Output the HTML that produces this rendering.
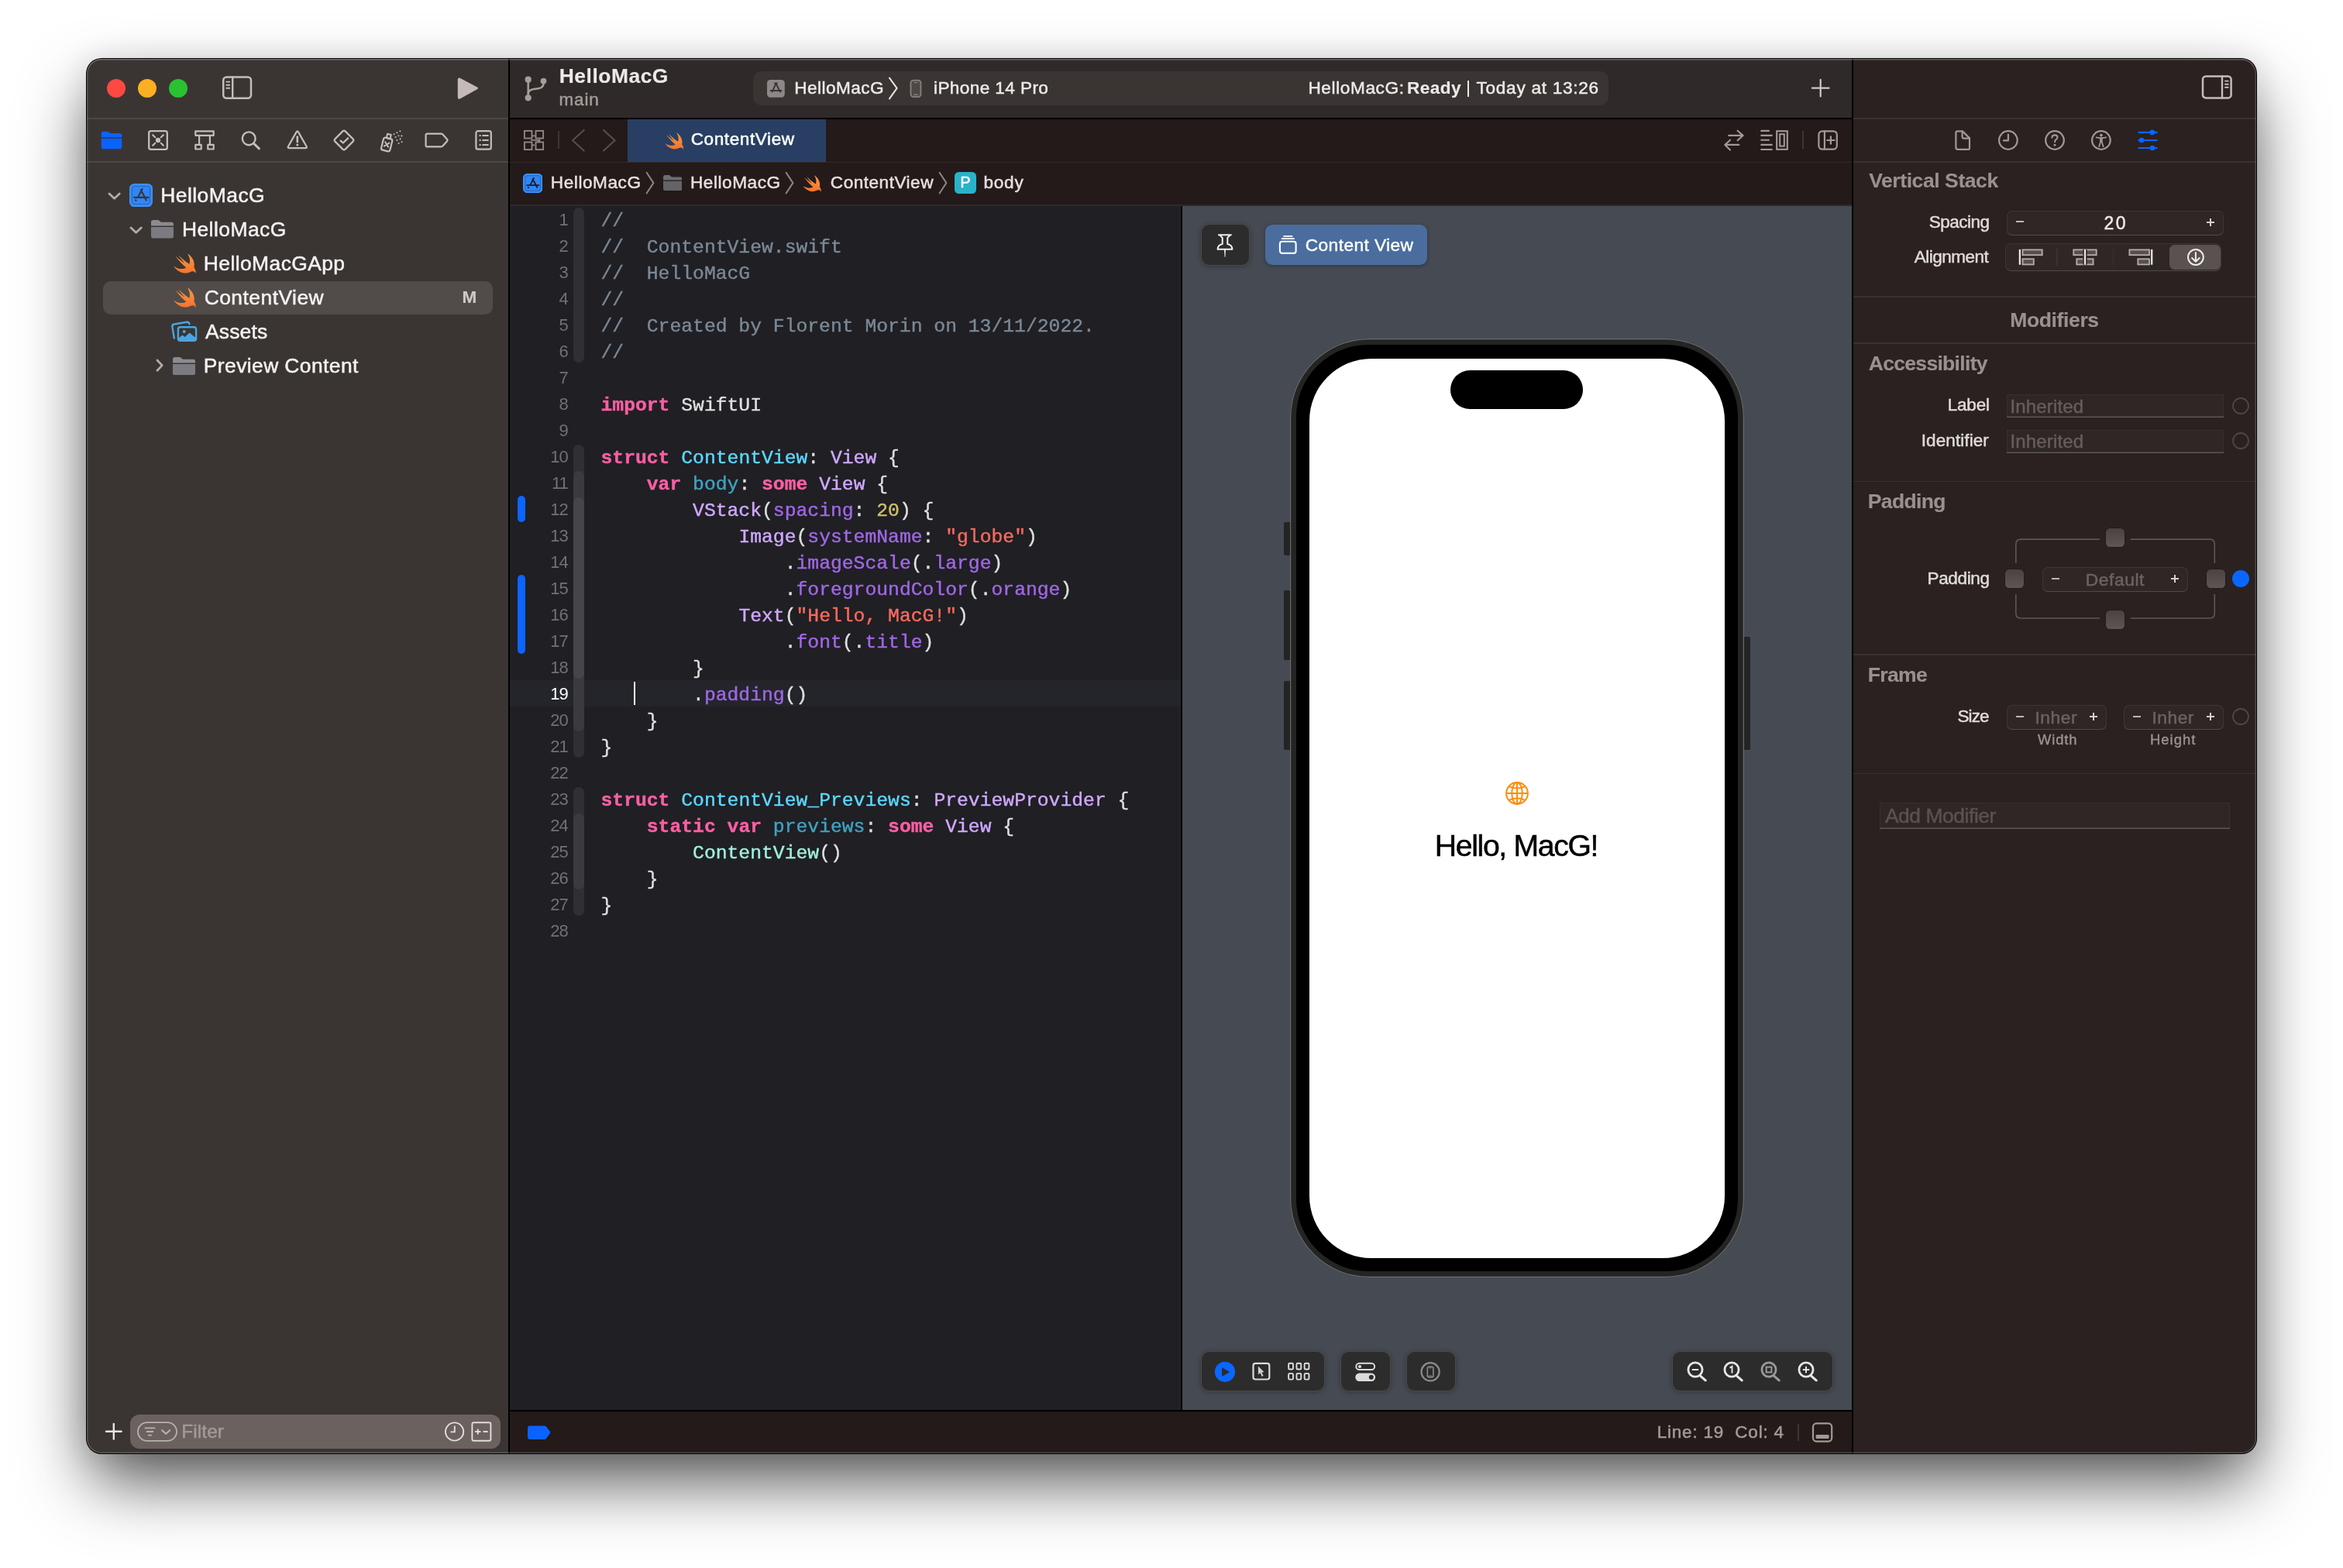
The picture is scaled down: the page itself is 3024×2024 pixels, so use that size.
<!DOCTYPE html>
<html><head><meta charset="utf-8"><title>Xcode</title>
<style>
html,body{margin:0;padding:0;}
body{width:3024px;height:2024px;background:#fff;overflow:hidden;position:relative;font-family:"Liberation Sans",sans-serif;}
#win{position:absolute;left:112px;top:76px;width:2800px;height:1800px;border-radius:19px;overflow:hidden;background:#2a2120;}
body:before{content:"";position:absolute;left:111px;top:75px;width:2802px;height:1802px;border-radius:20px;background:#000;
 box-shadow:0 40px 87px -7.3px rgba(0,0,0,.70),0 0 26px 12.3px rgba(0,0,0,.04);}
#in{position:absolute;left:-112px;top:-76px;width:3024px;height:2024px;will-change:transform;}
#rim{position:absolute;left:0;top:0;right:0;bottom:0;border-radius:19px;box-shadow:inset 0 0 0 1.5px rgba(255,255,255,.18),inset 0 1.5px 0 0 rgba(255,255,255,.14);pointer-events:none;}
.a{position:absolute;display:block;}
.t{position:absolute;white-space:pre;line-height:1;-webkit-text-stroke:0.5px;}
.code{position:absolute;left:775.5px;top:268.1px;font-family:"Liberation Mono",monospace;font-size:24.7px;line-height:34px;white-space:pre;color:#dfdfe0;letter-spacing:0.007px;-webkit-text-stroke:0.4px;}
.code b{font-weight:700;color:#fc5fa3;}
.c{color:#7b8895}.ty{color:#5dd8ff}.pt{color:#9ef1dd}.ot{color:#d0a8ff}.dc{color:#41a1c0}.fn{color:#a167e6}.st{color:#fc6a5d}.nu{color:#d0bf69}
.ln{position:absolute;left:658px;width:74.8px;text-align:right;font-size:22px;line-height:34px;color:#707076;letter-spacing:-1px;top:267.2px;white-space:pre;}
.ln i{font-style:normal;color:#fff;}

</style></head>
<body>
<div id="win">
<div id="in">
<div class="a" style="left:112px;top:76px;width:544.00px;height:1800.00px;background:#3a3533;"></div>
<div class="a" style="left:656px;top:76px;width:2.00px;height:1800.00px;background:#000;"></div>
<div class="a" style="left:658px;top:76px;width:1732.00px;height:76.00px;background:#2f2a29;"></div>
<div class="a" style="left:658px;top:152px;width:1732.00px;height:2.00px;background:#000;"></div>
<div class="a" style="left:658px;top:154px;width:1732.00px;height:110.00px;background:#231a19;"></div>
<div class="a" style="left:658px;top:208.5px;width:1732.00px;height:1.50px;background:#332b2a;"></div>
<div class="a" style="left:658px;top:264px;width:866.00px;height:1556.00px;background:#1f1f24;"></div>
<div class="a" style="left:1520.6px;top:265.6px;width:3.40px;height:1554.40px;background:#222227;"></div>
<div class="a" style="left:1524px;top:264px;width:2.00px;height:1556.00px;background:#000;"></div>
<div class="a" style="left:1526px;top:264px;width:864.00px;height:1556.00px;background:#454a53;"></div>
<div class="a" style="left:658px;top:264px;width:1732.00px;height:1.60px;background:#31282a;"></div>
<div class="a" style="left:658px;top:1820px;width:1732.00px;height:2.00px;background:#000;"></div>
<div class="a" style="left:658px;top:1822px;width:1732.00px;height:54.00px;background:#231a19;"></div>
<div class="a" style="left:2390px;top:76px;width:2.00px;height:1800.00px;background:#000;"></div>
<div class="a" style="left:2392px;top:76px;width:520.00px;height:1800.00px;background:#2a2120;"></div>
<div class="a" style="left:112px;top:152.4px;width:544.00px;height:1.80px;background:#4d4745;"></div>
<div class="a" style="left:112px;top:208.4px;width:544.00px;height:1.80px;background:#4d4745;"></div>
<div class="a" style="left:2392px;top:152.3px;width:520.00px;height:1.50px;background:#3a3231;"></div>
<div class="a" style="left:2392px;top:208.4px;width:520.00px;height:1.50px;background:#3a3231;"></div>
<div class="a" style="left:2392px;top:382px;width:520.00px;height:1.50px;background:#3a3231;"></div>
<div class="a" style="left:2392px;top:442.4px;width:520.00px;height:1.50px;background:#3a3231;"></div>
<div class="a" style="left:2392px;top:620.5px;width:520.00px;height:1.50px;background:#3a3231;"></div>
<div class="a" style="left:2392px;top:844.3px;width:520.00px;height:1.50px;background:#3a3231;"></div>
<div class="a" style="left:2392px;top:997.8px;width:520.00px;height:1.50px;background:#3a3231;"></div>
<div class="a" style="left:138px;top:102px;width:24.00px;height:24.00px;background:#fe4943;border-radius:12px;"></div>
<div class="a" style="left:178px;top:102px;width:24.00px;height:24.00px;background:#fdaf24;border-radius:12px;"></div>
<div class="a" style="left:218px;top:102px;width:24.00px;height:24.00px;background:#29c231;border-radius:12px;"></div>
<div class="a" style="left:132.5px;top:362.5px;width:503.50px;height:43.50px;background:#514b49;border-radius:10px;"></div>
<div class="t" style="left:207.23px;top:239.23px;font-size:26.4px;color:#f4f2f1;letter-spacing:0.483px;">HelloMacG</div>
<div class="t" style="left:234.93px;top:283.23px;font-size:26.4px;color:#f4f2f1;letter-spacing:0.483px;">HelloMacG</div>
<div class="t" style="left:262.83px;top:327.23px;font-size:26.4px;color:#f4f2f1;letter-spacing:0.430px;">HelloMacGApp</div>
<div class="t" style="left:263.66px;top:371.23px;font-size:26.4px;color:#f4f2f1;letter-spacing:0.486px;">ContentView</div>
<div class="t" style="left:264.95px;top:415.23px;font-size:26.4px;color:#f4f2f1;letter-spacing:0.216px;">Assets</div>
<div class="t" style="left:262.83px;top:459.23px;font-size:26.4px;color:#f4f2f1;letter-spacing:0.419px;">Preview Content</div>
<div class="t" style="left:596.49px;top:373.19px;font-size:22.5px;color:#cfc8c5;font-weight:700;-webkit-text-stroke:0.15px;">M</div>
<div class="a" style="left:168px;top:1826px;width:477.50px;height:43.50px;background:#6b6260;border-radius:12px;"></div>
<div class="t" style="left:234.29px;top:1835.68px;font-size:24.5px;color:#a39a97;letter-spacing:0.054px;">Filter</div>
<div class="t" style="left:721.73px;top:85.43px;font-size:26.4px;color:#eceae9;font-weight:700;-webkit-text-stroke:0.15px;letter-spacing:0.533px;">HelloMacG</div>
<div class="t" style="left:721.41px;top:117.59px;font-size:22.5px;color:#a59c99;letter-spacing:0.862px;">main</div>
<div class="a" style="left:972px;top:92px;width:1104.00px;height:44.00px;background:#3a3433;border-radius:11px;"></div>
<div class="t" style="left:1025.35px;top:102.54px;font-size:22.6px;color:#eceae9;letter-spacing:0.446px;">HelloMacG</div>
<div class="t" style="left:1204.99px;top:102.54px;font-size:22.6px;color:#eceae9;letter-spacing:0.393px;">iPhone 14 Pro</div>
<div class="t" style="left:1688.45px;top:102.84px;font-size:22.6px;color:#eceae9;letter-spacing:0.607px;">HelloMacG:</div>
<div class="t" style="left:1816.09px;top:102.84px;font-size:22.6px;color:#eceae9;font-weight:700;-webkit-text-stroke:0.15px;letter-spacing:0.424px;">Ready</div>
<div class="a" style="left:1894.3px;top:103.6px;width:1.90px;height:21.80px;background:#eceae9;"></div>
<div class="t" style="left:1905.49px;top:102.84px;font-size:22.6px;color:#eceae9;letter-spacing:0.725px;">Today at 13:26</div>
<div class="a" style="left:810px;top:154px;width:256.00px;height:54.50px;background:#283f63;"></div>
<div class="t" style="left:891.65px;top:169.24px;font-size:22.6px;color:#fff;letter-spacing:0.576px;">ContentView</div>
<div class="t" style="left:710.85px;top:224.64px;font-size:22.6px;color:#e4e0df;letter-spacing:0.558px;">HelloMacG</div>
<div class="t" style="left:890.95px;top:224.64px;font-size:22.6px;color:#e4e0df;letter-spacing:0.558px;">HelloMacG</div>
<div class="t" style="left:1071.85px;top:224.64px;font-size:22.6px;color:#e4e0df;letter-spacing:0.496px;">ContentView</div>
<div class="t" style="left:1269.54px;top:224.64px;font-size:22.6px;color:#e4e0df;letter-spacing:0.731px;">body</div>
<div class="a" style="left:658px;top:877.8px;width:866.00px;height:34.00px;background:#23252b;"></div>
<div class="a" style="left:668px;top:639.5px;width:10.00px;height:34.00px;background:#0b65fe;border-radius:5px;"></div>
<div class="a" style="left:668px;top:742px;width:10.00px;height:101.50px;background:#0b65fe;border-radius:5px;"></div>
<div class="a" style="left:739.9px;top:268.0px;width:14.50px;height:199.70px;background:#2f2f34;border-radius:7.25px;"></div>
<div class="a" style="left:739.9px;top:574.0px;width:14.50px;height:403.70px;background:#2f2f34;border-radius:7.25px;"></div>
<div class="a" style="left:739.9px;top:608.0px;width:14.50px;height:335.70px;background:#3a3a3f;border-radius:7.25px;"></div>
<div class="a" style="left:739.9px;top:642.0px;width:14.50px;height:233.70px;background:#45454a;border-radius:7.25px;"></div>
<div class="a" style="left:739.9px;top:1016.0px;width:14.50px;height:165.70px;background:#2f2f34;border-radius:7.25px;"></div>
<div class="a" style="left:739.9px;top:1050.0px;width:14.50px;height:97.70px;background:#3a3a3f;border-radius:7.25px;"></div>
<div class="ln">1
2
3
4
5
6
7
8
9
10
11
12
13
14
15
16
17
18
<i>19</i>
20
21
22
23
24
25
26
27
28</div>
<div class="code"><span class="c">//</span>
<span class="c">//  ContentView.swift</span>
<span class="c">//  HelloMacG</span>
<span class="c">//</span>
<span class="c">//  Created by Florent Morin on 13/11/2022.</span>
<span class="c">//</span>

<b>import</b> SwiftUI

<b>struct</b> <span class="ty">ContentView</span>: <span class="ot">View</span> {
    <b>var</b> <span class="dc">body</span>: <b>some</b> <span class="ot">View</span> {
        <span class="ot">VStack</span>(<span class="fn">spacing</span>: <span class="nu">20</span>) {
            <span class="ot">Image</span>(<span class="fn">systemName</span>: <span class="st">"globe"</span>)
                .<span class="fn">imageScale</span>(.<span class="fn">large</span>)
                .<span class="fn">foregroundColor</span>(.<span class="fn">orange</span>)
            <span class="ot">Text</span>(<span class="st">"Hello, MacG!"</span>)
                .<span class="fn">font</span>(.<span class="fn">title</span>)
        }
        .<span class="fn">padding</span>()
    }
}

<b>struct</b> <span class="ty">ContentView_Previews</span>: <span class="ot">PreviewProvider</span> {
    <b>static</b> <b>var</b> <span class="dc">previews</span>: <b>some</b> <span class="ot">View</span> {
        <span class="pt">ContentView</span>()
    }
}
</div>
<div class="a" style="left:818px;top:880.3px;width:2.30px;height:29.50px;background:#fff;"></div>
<div class="a" style="left:1551px;top:290px;width:61.00px;height:51.50px;background:#2c2c2d;border-radius:9.5px;box-shadow:0 0 0 1px rgba(78,76,68,.85),0 1px 6px 1px rgba(0,0,0,.28);"></div>
<div class="a" style="left:1633.3px;top:290px;width:208.50px;height:51.60px;background:#4a6d9e;border-radius:9.5px;box-shadow:0 1px 5px rgba(0,0,0,.3);"></div>
<div class="t" style="left:1684.74px;top:304.54px;font-size:22.8px;color:#fff;letter-spacing:0.373px;-webkit-text-stroke:0.4px #fff;">Content View</div>
<div class="a" style="left:1657px;top:673.5px;width:10.00px;height:43.50px;background:#242424;border-radius:2px;"></div>
<div class="a" style="left:1657px;top:762px;width:10.00px;height:89.50px;background:#242424;border-radius:2px;"></div>
<div class="a" style="left:1657px;top:878.5px;width:10.00px;height:89.00px;background:#242424;border-radius:2px;"></div>
<div class="a" style="left:2249px;top:822px;width:9.50px;height:145.50px;background:#242424;border-radius:2px;"></div>
<div class="a" style="left:1664.8px;top:436.7px;width:586.50px;height:1212.30px;background:#242424;border-radius:102px;box-shadow:inset 0 0 0 1.2px #6b6b6b;"></div>
<div class="a" style="left:1672.9px;top:445.2px;width:570.30px;height:1195.60px;background:#000;border-radius:93px;"></div>
<div class="a" style="left:1690px;top:462.8px;width:536.00px;height:1161.20px;background:#fff;border-radius:80px;"></div>
<div class="a" style="left:1872.3px;top:477.8px;width:170.70px;height:50.70px;background:#000;border-radius:26px;"></div>
<div class="t" style="left:1851.78px;top:1072.39px;font-size:39.2px;color:#000;letter-spacing:-1.343px;">Hello, MacG!</div>
<div class="a" style="left:1551px;top:1744.5px;width:158.00px;height:50.50px;background:#2c2c2d;border-radius:9.5px;box-shadow:0 0 0 1px rgba(78,76,68,.85),0 1px 6px 1px rgba(0,0,0,.28);"></div>
<div class="a" style="left:1730.5px;top:1744.5px;width:63.50px;height:50.50px;background:#2c2c2d;border-radius:9.5px;box-shadow:0 0 0 1px rgba(78,76,68,.85),0 1px 6px 1px rgba(0,0,0,.28);"></div>
<div class="a" style="left:1816px;top:1744.5px;width:62.00px;height:50.50px;background:#2c2c2d;border-radius:9.5px;box-shadow:0 0 0 1px rgba(78,76,68,.85),0 1px 6px 1px rgba(0,0,0,.28);"></div>
<div class="a" style="left:2158.5px;top:1744.5px;width:206.50px;height:50.50px;background:#2c2c2d;border-radius:9.5px;box-shadow:0 0 0 1px rgba(78,76,68,.85),0 1px 6px 1px rgba(0,0,0,.28);"></div>
<div class="t" style="left:2138.65px;top:1837.69px;font-size:22.5px;color:#a29b98;letter-spacing:0.810px;-webkit-text-stroke:0.5px #a29b98;">Line: 19  Col: 4</div>
<div class="t" style="left:2412.22px;top:219.68px;font-size:26.5px;color:#9a918e;font-weight:700;-webkit-text-stroke:0.15px;letter-spacing:-0.417px;">Vertical Stack</div>
<div class="t" style="left:2594.23px;top:400.48px;font-size:26.5px;color:#9a918e;font-weight:700;-webkit-text-stroke:0.15px;letter-spacing:-0.366px;">Modifiers</div>
<div class="t" style="left:2411.74px;top:456.28px;font-size:26.5px;color:#9a918e;font-weight:700;-webkit-text-stroke:0.15px;letter-spacing:-0.686px;">Accessibility</div>
<div class="t" style="left:2410.83px;top:634.28px;font-size:26.5px;color:#9a918e;font-weight:700;-webkit-text-stroke:0.15px;letter-spacing:-0.664px;">Padding</div>
<div class="t" style="left:2410.83px;top:858.48px;font-size:26.5px;color:#9a918e;font-weight:700;-webkit-text-stroke:0.15px;letter-spacing:-0.665px;">Frame</div>
<div class="t" style="left:2489.68px;top:276.19px;font-size:22.5px;color:#dfdbd9;letter-spacing:-0.507px;">Spacing</div>
<div class="t" style="left:2470.76px;top:320.69px;font-size:22.5px;color:#dfdbd9;letter-spacing:-0.518px;">Alignment</div>
<div class="t" style="left:2513.65px;top:512.19px;font-size:22.5px;color:#dfdbd9;letter-spacing:-0.176px;">Label</div>
<div class="t" style="left:2479.72px;top:558.19px;font-size:22.5px;color:#dfdbd9;letter-spacing:0.094px;">Identifier</div>
<div class="t" style="left:2487.55px;top:735.69px;font-size:22.5px;color:#dfdbd9;letter-spacing:-0.363px;">Padding</div>
<div class="t" style="left:2526.48px;top:913.69px;font-size:22.5px;color:#dfdbd9;letter-spacing:-0.917px;">Size</div>
<svg class="a" style="left:285px;top:96px;" width="42" height="34" viewBox="0 0 42 34"><rect x="3.2" y="3.4" width="35.8" height="27.4" rx="4.2" fill="none" stroke="#c6bdba" stroke-width="2.5" stroke-linecap="round" stroke-linejoin="round" /><path d="M15.2 3.4V30.8" fill="none" stroke="#c6bdba" stroke-width="2.4" stroke-linecap="round" stroke-linejoin="round" /><path d="M7.3 9.6h4M7.3 13.7h4M7.3 17.8h4" fill="none" stroke="#c6bdba" stroke-width="1.9" stroke-linecap="round" stroke-linejoin="round" /></svg>
<svg class="a" style="left:588px;top:97px;" width="34" height="34" viewBox="0 0 34 34"><path d="M6.2 4 L27.4 15.2 Q30.6 16.9 27.4 18.6 L6.2 30.2 Q2.8 32 2.8 28.4 V5.8 Q2.8 2.2 6.2 4Z" fill="#c4bbb8"/></svg>
<svg class="a" style="left:130px;top:168px;" width="30" height="26" viewBox="0 0 30 26"><path d="M0.8 9.2V4.6Q0.8 1.8 3.6 1.8H8.4Q9.8 1.8 10.8 2.7L11.6 3.4Q12.4 4 13.6 4H24.4Q27.2 4 27.2 6.8V9.2Z" fill="#0b63ff"/><path d="M0.8 10.7H27.2V21.4Q27.2 24.2 24.4 24.2H3.6Q0.8 24.2 0.8 21.4Z" fill="#0b63ff"/></svg>
<svg class="a" style="left:189px;top:166px;" width="30" height="30" viewBox="0 0 30 30"><rect x="3.2" y="3.2" width="23.6" height="23.6" rx="2.6" fill="none" stroke="#c6bdba" stroke-width="2.3" stroke-linecap="round" stroke-linejoin="round" /><circle cx="15" cy="15" r="3.2" fill="#c6bdba"/><path d="M8.2 8.2l3 3M21.8 8.2l-3 3M8.2 21.8l3-3M21.8 21.8l-3-3" fill="none" stroke="#c6bdba" stroke-width="2.1" stroke-linecap="round" stroke-linejoin="round" /></svg>
<svg class="a" style="left:249px;top:166px;" width="30" height="30" viewBox="0 0 30 30"><rect x="3.3" y="3.4" width="23.4" height="5.4" fill="none" stroke="#c6bdba" stroke-width="2.2" stroke-linecap="round" stroke-linejoin="round"  stroke-linejoin="miter"/><path d="M8.1 8.8V20.9M21.9 8.8V20.9" fill="none" stroke="#c6bdba" stroke-width="2.2" stroke-linecap="round" stroke-linejoin="round" /><rect x="3.3" y="20.9" width="7.4" height="5.6" fill="none" stroke="#c6bdba" stroke-width="2.2" stroke-linecap="round" stroke-linejoin="round"  stroke-linejoin="miter"/><rect x="19.3" y="20.9" width="7.4" height="5.6" fill="none" stroke="#c6bdba" stroke-width="2.2" stroke-linecap="round" stroke-linejoin="round"  stroke-linejoin="miter"/></svg>
<svg class="a" style="left:309px;top:166px;" width="30" height="30" viewBox="0 0 30 30"><circle cx="12.2" cy="12.8" r="8.4" fill="none" stroke="#c6bdba" stroke-width="2.4" stroke-linecap="round" stroke-linejoin="round" /><path d="M18.4 19.2L25.4 25.8" fill="none" stroke="#c6bdba" stroke-width="3" stroke-linecap="round" stroke-linejoin="round" /></svg>
<svg class="a" style="left:369px;top:166px;" width="30" height="30" viewBox="0 0 30 30"><path d="M13.6 4.4Q14.8 2.4 16 4.4L26.6 23Q27.6 25.2 25.4 25.2H4.2Q2 25.2 3 23Z" fill="none" stroke="#c6bdba" stroke-width="2.2" stroke-linecap="round" stroke-linejoin="round" /><path d="M14.8 10.6V17.2" fill="none" stroke="#c6bdba" stroke-width="2.6" stroke-linecap="round" stroke-linejoin="round" /><circle cx="14.8" cy="21.1" r="1.5" fill="#c6bdba"/></svg>
<svg class="a" style="left:429px;top:166px;" width="30" height="30" viewBox="0 0 30 30"><path d="M13.4 3.4Q15 1.9 16.6 3.4L26.6 13.4Q28.1 15 26.6 16.6L16.6 26.6Q15 28.1 13.4 26.6L3.4 16.6Q1.9 15 3.4 13.4Z" fill="none" stroke="#c6bdba" stroke-width="2.2" stroke-linecap="round" stroke-linejoin="round" /><path d="M10.6 15.6L13.8 18.5L20.2 12.4" fill="none" stroke="#c6bdba" stroke-width="2.3" stroke-linecap="round" stroke-linejoin="round" /></svg>
<svg class="a" style="left:487px;top:164px;" width="36" height="34" viewBox="0 0 36 34"><g transform="translate(-1.6 0.4) rotate(14 14 22)"><rect x="8" y="14" width="11.6" height="16.4" rx="2.4" fill="none" stroke="#c6bdba" stroke-width="2.2" stroke-linecap="round" stroke-linejoin="round" /><rect x="11.4" y="8.6" width="4.8" height="5.4" fill="none" stroke="#c6bdba" stroke-width="2" stroke-linecap="round" stroke-linejoin="round" /><path d="M11.2 19.6l5.2 5.2M16.4 19.6l-5.2 5.2" fill="none" stroke="#c6bdba" stroke-width="2" stroke-linecap="round" stroke-linejoin="round" /></g><g fill="#c6bdba"><circle cx="21.6" cy="9.2" r="1.05"/><circle cx="25.4" cy="7.2" r="1.05"/><circle cx="29.4" cy="5.2" r="1.05"/><circle cx="23.6" cy="13" r="1.05"/><circle cx="27.4" cy="11.2" r="1.05"/><circle cx="31.4" cy="11.4" r="1.05"/><circle cx="25.4" cy="17" r="1.05"/><circle cx="29.6" cy="15.4" r="1.05"/><circle cx="27.6" cy="21" r="1.05"/><circle cx="31.6" cy="19.2" r="1.05"/></g></svg>
<svg class="a" style="left:547px;top:168px;" width="34" height="26" viewBox="0 0 34 26"><path d="M4.6 4.6H22.2Q23.6 4.6 24.4 5.6L30.2 12Q30.9 13 30.2 14L24.4 20.4Q23.6 21.4 22.2 21.4H4.6Q2.6 21.4 2.6 19.4V6.6Q2.6 4.6 4.6 4.6Z" fill="none" stroke="#c6bdba" stroke-width="2.2" stroke-linecap="round" stroke-linejoin="round" /></svg>
<svg class="a" style="left:609px;top:166px;" width="30" height="30" viewBox="0 0 30 30"><rect x="5.4" y="3.2" width="19.4" height="23.4" rx="2.4" fill="none" stroke="#c6bdba" stroke-width="2.2" stroke-linecap="round" stroke-linejoin="round" /><path d="M14.2 9h6.6M14.2 15h6.6M14.2 21h6.6" fill="none" stroke="#c6bdba" stroke-width="2.2" stroke-linecap="round" stroke-linejoin="round" /><path d="M10.4 9h.5M10.4 15h.5M10.4 21h.5" fill="none" stroke="#c6bdba" stroke-width="2.2" stroke-linecap="round" stroke-linejoin="round" /></svg>
<svg width="0" height="0" style="position:absolute"><defs><linearGradient id="sw" x1="0" y1="0" x2="0" y2="1"><stop offset="0" stop-color="#fd9742"/><stop offset="1" stop-color="#f4742c"/></linearGradient></defs></svg>
<svg class="a" style="left:223.9px;top:327px;" width="29.7" height="27.09" viewBox="0 0 29.7 27.09"><path transform="scale(1.5848) translate(-2.42 -3.41)" d="M13.543 3.41c4.114 2.47 6.545 7.162 5.549 11.131-.024.093-.05.181-.076.272l.002.001c2.062 2.538 1.5 5.258 1.236 4.745-1.072-2.086-3.066-1.568-4.088-1.043a6.803 6.803 0 0 1-.281.158l-.02.012-.002.002c-2.115 1.123-4.957 1.205-7.812-.022a12.568 12.568 0 0 1-5.64-4.838c.649.48 1.35.902 2.097 1.252 3.019 1.414 6.051 1.311 8.197-.002C9.651 12.73 7.101 9.67 5.146 7.191a10.628 10.628 0 0 1-1.005-1.384c2.34 2.142 6.038 4.83 7.365 5.576C8.69 8.408 6.208 4.743 6.324 4.86c4.436 4.47 8.528 6.996 8.528 6.996.154.085.27.154.36.213.085-.215.16-.437.224-.668.708-2.588-.09-5.548-1.893-7.992z" fill="url(#sw)"/></svg>
<svg class="a" style="left:223.9px;top:370.6px;" width="29.7" height="27.09" viewBox="0 0 29.7 27.09"><path transform="scale(1.5848) translate(-2.42 -3.41)" d="M13.543 3.41c4.114 2.47 6.545 7.162 5.549 11.131-.024.093-.05.181-.076.272l.002.001c2.062 2.538 1.5 5.258 1.236 4.745-1.072-2.086-3.066-1.568-4.088-1.043a6.803 6.803 0 0 1-.281.158l-.02.012-.002.002c-2.115 1.123-4.957 1.205-7.812-.022a12.568 12.568 0 0 1-5.64-4.838c.649.48 1.35.902 2.097 1.252 3.019 1.414 6.051 1.311 8.197-.002C9.651 12.73 7.101 9.67 5.146 7.191a10.628 10.628 0 0 1-1.005-1.384c2.34 2.142 6.038 4.83 7.365 5.576C8.69 8.408 6.208 4.743 6.324 4.86c4.436 4.47 8.528 6.996 8.528 6.996.154.085.27.154.36.213.085-.215.16-.437.224-.668.708-2.588-.09-5.548-1.893-7.992z" fill="url(#sw)"/></svg>
<svg class="a" style="left:857.7px;top:170.7px;" width="25.1" height="22.9" viewBox="0 0 25.1 22.9"><path transform="scale(1.3308) translate(-2.42 -3.41)" d="M13.543 3.41c4.114 2.47 6.545 7.162 5.549 11.131-.024.093-.05.181-.076.272l.002.001c2.062 2.538 1.5 5.258 1.236 4.745-1.072-2.086-3.066-1.568-4.088-1.043a6.803 6.803 0 0 1-.281.158l-.02.012-.002.002c-2.115 1.123-4.957 1.205-7.812-.022a12.568 12.568 0 0 1-5.64-4.838c.649.48 1.35.902 2.097 1.252 3.019 1.414 6.051 1.311 8.197-.002C9.651 12.73 7.101 9.67 5.146 7.191a10.628 10.628 0 0 1-1.005-1.384c2.34 2.142 6.038 4.83 7.365 5.576C8.69 8.408 6.208 4.743 6.324 4.86c4.436 4.47 8.528 6.996 8.528 6.996.154.085.27.154.36.213.085-.215.16-.437.224-.668.708-2.588-.09-5.548-1.893-7.992z" fill="url(#sw)"/></svg>
<svg class="a" style="left:1036px;top:226.2px;" width="24.8" height="22.63" viewBox="0 0 24.8 22.63"><path transform="scale(1.3142) translate(-2.42 -3.41)" d="M13.543 3.41c4.114 2.47 6.545 7.162 5.549 11.131-.024.093-.05.181-.076.272l.002.001c2.062 2.538 1.5 5.258 1.236 4.745-1.072-2.086-3.066-1.568-4.088-1.043a6.803 6.803 0 0 1-.281.158l-.02.012-.002.002c-2.115 1.123-4.957 1.205-7.812-.022a12.568 12.568 0 0 1-5.64-4.838c.649.48 1.35.902 2.097 1.252 3.019 1.414 6.051 1.311 8.197-.002C9.651 12.73 7.101 9.67 5.146 7.191a10.628 10.628 0 0 1-1.005-1.384c2.34 2.142 6.038 4.83 7.365 5.576C8.69 8.408 6.208 4.743 6.324 4.86c4.436 4.47 8.528 6.996 8.528 6.996.154.085.27.154.36.213.085-.215.16-.437.224-.668.708-2.588-.09-5.548-1.893-7.992z" fill="url(#sw)"/></svg>
<svg class="a" style="left:139.4px;top:247.9px;" width="17.2" height="10.2" viewBox="0 0 17.2 10.2"><path d="M2 2L8.6 8.2L15.2 2" fill="none" stroke="#b4aba8" stroke-width="2.8" stroke-linecap="round" stroke-linejoin="round"/></svg>
<svg class="a" style="left:167.4px;top:292.0px;" width="17.2" height="10.2" viewBox="0 0 17.2 10.2"><path d="M2 2L8.6 8.2L15.2 2" fill="none" stroke="#b4aba8" stroke-width="2.8" stroke-linecap="round" stroke-linejoin="round"/></svg>
<svg class="a" style="left:201.1px;top:463.2px;" width="10.2" height="17.2" viewBox="0 0 10.2 17.2"><path d="M2 2L8.2 8.6L2 15.2" fill="none" stroke="#b4aba8" stroke-width="2.8" stroke-linecap="round" stroke-linejoin="round"/></svg>
<svg class="a" style="left:166.7px;top:237px;" width="30" height="30" viewBox="0 0 30 30"><g transform="scale(1.0000)"><rect x="0" y="0" width="30" height="30" rx="6.4" fill="#3a90ff"/><rect x="2.7" y="2.7" width="24.6" height="24.6" rx="4.2" fill="#2c5fa8"/><rect x="3.8" y="3.8" width="22.4" height="22.4" rx="3.3" fill="#2e86fb"/><path d="M16.6 7L11 18M14.9 8.3L21.8 21.4M6.2 17.9H24.4M8 21.2L8.6 21.8" fill="none" stroke="#3a3533" stroke-width="2.1" stroke-linecap="round"/></g></svg>
<svg class="a" style="left:675px;top:224px;" width="25.2" height="25.2" viewBox="0 0 25.2 25.2"><g transform="scale(0.8400)"><rect x="0" y="0" width="30" height="30" rx="6.4" fill="#3a90ff"/><rect x="2.7" y="2.7" width="24.6" height="24.6" rx="4.2" fill="#2c5fa8"/><rect x="3.8" y="3.8" width="22.4" height="22.4" rx="3.3" fill="#2e86fb"/><path d="M16.6 7L11 18M14.9 8.3L21.8 21.4M6.2 17.9H24.4M8 21.2L8.6 21.8" fill="none" stroke="#231a19" stroke-width="2.1" stroke-linecap="round"/></g></svg>
<svg class="a" style="left:195px;top:284.3px;" width="29" height="23.6" viewBox="0 0 29 23.6"><g transform="scale(1.0000 1.0000)"><path d="M0 7.6V2.8Q0 0 2.8 0H8.4Q9.8 0 10.8 1L11.8 2Q12.6 2.8 14 2.8H26.2Q29 2.8 29 5.6V7.6Z" fill="#8c8b90"/><path d="M0 9H29V20.8Q29 23.6 26.2 23.6H2.8Q0 23.6 0 20.8Z" fill="#7c7b81"/></g></svg>
<svg class="a" style="left:223px;top:460.8px;" width="29" height="23.6" viewBox="0 0 29 23.6"><g transform="scale(1.0000 1.0000)"><path d="M0 7.6V2.8Q0 0 2.8 0H8.4Q9.8 0 10.8 1L11.8 2Q12.6 2.8 14 2.8H26.2Q29 2.8 29 5.6V7.6Z" fill="#8c8b90"/><path d="M0 9H29V20.8Q29 23.6 26.2 23.6H2.8Q0 23.6 0 20.8Z" fill="#7c7b81"/></g></svg>
<svg class="a" style="left:855.6px;top:225.6px;" width="24.4" height="20" viewBox="0 0 24.4 20"><g transform="scale(0.8414 0.8475)"><path d="M0 7.6V2.8Q0 0 2.8 0H8.4Q9.8 0 10.8 1L11.8 2Q12.6 2.8 14 2.8H26.2Q29 2.8 29 5.6V7.6Z" fill="#6d6c71"/><path d="M0 9H29V20.8Q29 23.6 26.2 23.6H2.8Q0 23.6 0 20.8Z" fill="#646368"/></g></svg>
<svg class="a" style="left:219px;top:411px;" width="38" height="33" viewBox="0 0 38 33"><g transform="rotate(-9.5 14 15)"><path d="M4.2 24V9.2Q4.2 6.2 7.2 6.2H23.6Q26.6 6.2 26.6 9.2" fill="none" stroke="#4aa5e0" stroke-width="2.4" stroke-linecap="round"/></g><rect x="10.9" y="11.2" width="23.2" height="17.6" rx="2.8" fill="#3a3533" stroke="#4aa5e0" stroke-width="2.4"/><circle cx="18.7" cy="16.9" r="2" fill="#4aa5e0"/><path d="M10.9 26L16.4 21.4L19.6 24L25.6 18.6L34.1 25.6V27Q34.1 28.8 32.3 28.8H12.7Q10.9 28.8 10.9 27Z" fill="#4aa5e0"/></svg>
<svg class="a" style="left:672px;top:94px;" width="40" height="42" viewBox="0 0 40 42"><path d="M9.7 8.7V32.3" fill="none" stroke="#a69d9a" stroke-width="2.5"/><path d="M29.5 10.6V13.4Q29.5 19.2 22.6 20.2L15.6 21.2Q9.7 22.2 9.7 27.6" fill="none" stroke="#a69d9a" stroke-width="2.5"/><circle cx="9.7" cy="8.7" r="4.1" fill="#a69d9a"/><circle cx="29.5" cy="10.6" r="3.9" fill="#a69d9a"/><circle cx="9.7" cy="32.3" r="4.1" fill="#a69d9a"/></svg>
<svg class="a" style="left:990px;top:103px;" width="23" height="23" viewBox="0 0 23 23"><rect x="0" y="0" width="22.8" height="22.8" rx="4.2" fill="#8d8887"/><path d="M11.6 4.6L6.6 15.4M10 4.5H12.8M11.9 5.6L17 15.6M4.6 14H18.6" fill="none" stroke="#3a3433" stroke-width="1.9" stroke-linecap="round"/></svg>
<svg class="a" style="left:1145px;top:98px;" width="16" height="32" viewBox="0 0 16 32"><path d="M3 2.6L12.6 15.9L3 29.4" fill="none" stroke="#e4e0de" stroke-width="2.1" stroke-linecap="round" stroke-linejoin="round"/></svg>
<svg class="a" style="left:1173px;top:101px;" width="18" height="27" viewBox="0 0 18 27"><rect x="2.5" y="2.8" width="12.9" height="21.2" rx="3.2" fill="#4d4746" stroke="#837c7a" stroke-width="2"/><path d="M7 5.6h3.9M6.6 21.3h4.7" stroke="#837c7a" stroke-width="1.4" stroke-linecap="round"/></svg>
<svg class="a" style="left:2336px;top:100px;" width="28" height="28" viewBox="0 0 28 28"><path d="M13.7 2.9V24.5M2.9 13.7H24.5" stroke="#cfc8c5" stroke-width="2.2" stroke-linecap="round"/></svg>
<svg class="a" style="left:2839px;top:95px;" width="46" height="36" viewBox="0 0 46 36"><rect x="4" y="3.4" width="36.6" height="28" rx="4" fill="none" stroke="#c6bdba" stroke-width="2.5" stroke-linecap="round" stroke-linejoin="round" /><path d="M29 3.4V31.4" fill="none" stroke="#c6bdba" stroke-width="2.4" stroke-linecap="round" stroke-linejoin="round" /><path d="M33 9.6h3.8M33 13.7h3.8M33 17.8h3.8" fill="none" stroke="#c6bdba" stroke-width="1.9" stroke-linecap="round" stroke-linejoin="round" /></svg>
<svg class="a" style="left:674px;top:166px;" width="30" height="30" viewBox="0 0 30 30"><g fill="none" stroke="#8f8784" stroke-width="1.9"><rect x="2.9" y="2.9" width="9.6" height="9.6"/><rect x="17.5" y="2.9" width="9.6" height="9.6"/><rect x="2.9" y="17.5" width="9.6" height="9.6"/><rect x="17.5" y="17.5" width="9.6" height="9.6"/><path d="M12.5 9.4H17.5M12.5 21.4H16M22.3 12.5V17.5M20.5 14.6V17.5M11 14.9H20.5"/></g></svg>
<div class="a" style="left:720.2px;top:169px;width:1.80px;height:23.00px;background:#3d3533;"></div>
<svg class="a" style="left:736.5px;top:165.75px;" width="18.6" height="30.5" viewBox="0 0 18.6 30.5"><path d="M16.6 2L2 15.25L16.6 28.5" fill="none" stroke="#574e4c" stroke-width="2.2" stroke-linecap="round" stroke-linejoin="round"/></svg>
<svg class="a" style="left:776.5px;top:165.75px;" width="18.6" height="30.5" viewBox="0 0 18.6 30.5"><path d="M2 2L16.6 15.25L2 28.5" fill="none" stroke="#574e4c" stroke-width="2.2" stroke-linecap="round" stroke-linejoin="round"/></svg>
<svg class="a" style="left:2222px;top:164px;" width="34" height="34" viewBox="0 0 34 34"><path d="M9.2 10.9H27.3M20.6 4.7L27.6 10.9L20.6 17.2" fill="none" stroke="#a39a97" stroke-width="2.1" stroke-linecap="round" stroke-linejoin="round" /><path d="M22.4 22.9H4.6M11 16.7L4.3 22.9L11 29.5" fill="none" stroke="#a39a97" stroke-width="2.1" stroke-linecap="round" stroke-linejoin="round" /></svg>
<svg class="a" style="left:2270px;top:164px;" width="42" height="34" viewBox="0 0 42 34"><path d="M2.4 4.9H13.8M2.4 10.9H17.6M2.4 16.7H13.8M2.4 22.9H17.6M2.4 29H17.6" stroke="#a39a97" stroke-width="2.1" fill="none"/><rect x="23.2" y="5.2" width="13.6" height="23.6" fill="none" stroke="#a39a97" stroke-width="2.1"/><rect x="27.2" y="9.2" width="5.6" height="15.4" fill="none" stroke="#a39a97" stroke-width="2"/></svg>
<div class="a" style="left:2326px;top:169px;width:1.80px;height:23.00px;background:#3d3533;"></div>
<svg class="a" style="left:2343px;top:164px;" width="34" height="34" viewBox="0 0 34 34"><rect x="4.4" y="5.3" width="23.4" height="23.4" rx="4.6" fill="none" stroke="#a39a97" stroke-width="2.2" stroke-linecap="round" stroke-linejoin="round" /><path d="M11.9 5.3V28.7" fill="none" stroke="#a39a97" stroke-width="2.2" stroke-linecap="round" stroke-linejoin="round" /><path d="M19.9 12.3V21.7M15.2 17H24.6" fill="none" stroke="#a39a97" stroke-width="2.2" stroke-linecap="round" stroke-linejoin="round" /></svg>
<svg class="a" style="left:2519px;top:164px;" width="30" height="34" viewBox="0 0 30 34"><path d="M7.6 5.4H14L23 14.4V27.2Q23 28.8 21.4 28.8H7.6Q5.4 28.8 5.4 26.6V7.6Q5.4 5.4 7.6 5.4Z" fill="none" stroke="#a29996" stroke-width="2.2" stroke-linecap="round" stroke-linejoin="round" /><path d="M13.6 5.6V12.6Q13.6 14.6 15.6 14.6H22.8" fill="none" stroke="#a29996" stroke-width="2.2" stroke-linecap="round" stroke-linejoin="round" /></svg>
<svg class="a" style="left:2577px;top:166px;" width="30" height="30" viewBox="0 0 30 30"><circle cx="14.9" cy="15" r="11.8" fill="none" stroke="#a29996" stroke-width="2.2" stroke-linecap="round" stroke-linejoin="round" /><path d="M14.9 7.6V15.4H9" fill="none" stroke="#a29996" stroke-width="2.2" stroke-linecap="round" stroke-linejoin="round"  stroke-linejoin="miter" stroke-linecap="butt"/></svg>
<svg class="a" style="left:2637px;top:166px;" width="30" height="30" viewBox="0 0 30 30"><circle cx="15" cy="15" r="11.8" fill="none" stroke="#a29996" stroke-width="2.2" stroke-linecap="round" stroke-linejoin="round" /><path d="M11.4 11.6Q11.6 8.4 15 8.4Q18.5 8.4 18.5 11.3Q18.5 13 16.6 14.2Q15 15.2 15 17.2" fill="none" stroke="#a29996" stroke-width="2.1" stroke-linecap="round" stroke-linejoin="round" /><circle cx="15" cy="21.2" r="1.45" fill="#a29996"/></svg>
<svg class="a" style="left:2697px;top:166px;" width="30" height="30" viewBox="0 0 30 30"><circle cx="14.9" cy="15" r="11.8" fill="none" stroke="#a29996" stroke-width="2.2" stroke-linecap="round" stroke-linejoin="round" /><circle cx="14.9" cy="8.6" r="1.9" fill="#a29996"/><path d="M8.6 11.4Q14.9 13 21.2 11.4" fill="none" stroke="#a29996" stroke-width="1.9" stroke-linecap="round" stroke-linejoin="round" /><path d="M14.9 12.4V16.4M14 12.6V17.2L12.2 23.2M15.8 12.6V17.2L17.6 23.2" fill="none" stroke="#a29996" stroke-width="1.8" stroke-linecap="round" stroke-linejoin="round" /></svg>
<svg class="a" style="left:2756px;top:164px;" width="34" height="34" viewBox="0 0 34 34"><path d="M4.4 6.9H27.8M4.4 17H27.8M4.4 27H27.8" stroke="#0a66ff" stroke-width="2.2" stroke-linecap="round"/><circle cx="21.8" cy="6.9" r="3.3" fill="#0a66ff"/><circle cx="8" cy="17" r="3.3" fill="#0a66ff"/><circle cx="22" cy="27" r="3.3" fill="#0a66ff"/></svg>
<svg class="a" style="left:831px;top:220px;" width="16" height="32" viewBox="0 0 16 32"><path d="M3.6 2.8L12.4 16.1L3.6 29.5" fill="none" stroke="#8d8582" stroke-width="2" stroke-linecap="round" stroke-linejoin="round"/></svg>
<svg class="a" style="left:1010.9px;top:220px;" width="16" height="32" viewBox="0 0 16 32"><path d="M3.6 2.8L12.4 16.1L3.6 29.5" fill="none" stroke="#8d8582" stroke-width="2" stroke-linecap="round" stroke-linejoin="round"/></svg>
<svg class="a" style="left:1208.8px;top:220px;" width="16" height="32" viewBox="0 0 16 32"><path d="M3.6 2.8L12.4 16.1L3.6 29.5" fill="none" stroke="#8d8582" stroke-width="2" stroke-linecap="round" stroke-linejoin="round"/></svg>
<div class="a" style="left:1232.2px;top:222.3px;width:27.60px;height:27.60px;background:#29b3c9;border-radius:5.5px;"></div>
<div class="t" style="left:1239.41px;top:226.30px;font-size:19.5px;color:#fff;-webkit-text-stroke:0.6px #fff;">P</div>
<svg class="a" style="left:1566px;top:298px;" width="30" height="38" viewBox="0 0 30 38"><path d="M6.9 5.2H22.9M8.4 5.5L11.7 8.9V17.1C8 17.7 5.8 20.4 5.6 23.8H24.4C24.2 20.4 22 17.7 18.3 17.1V8.9L21.6 5.5" fill="none" stroke="#f0f0f0" stroke-width="2" stroke-linejoin="round" stroke-linecap="round"/><path d="M14 23.8H16L15.4 33.4Q15 34.2 14.6 33.4Z" fill="#f0f0f0"/></svg>
<svg class="a" style="left:1648px;top:301px;" width="30" height="30" viewBox="0 0 30 30"><rect x="3.9" y="10.7" width="20.7" height="15.2" rx="3" fill="none" stroke="#fff" stroke-width="2.1"/><path d="M6.6 7H21.9" stroke="#fff" stroke-width="1.9" stroke-linecap="round"/><path d="M9 3.9H19.6" stroke="#fff" stroke-width="1.7" stroke-linecap="round"/></svg>
<svg class="a" style="left:1566px;top:1756px;" width="30" height="30" viewBox="0 0 30 30"><circle cx="15" cy="14.8" r="13.1" fill="#0a66ff"/><path d="M11 9.9V20.1Q11 20.9 11.8 20.5L20.4 15.5Q21.2 15 20.4 14.5L11.8 9.5Q11 9.1 11 9.9Z" fill="#2c2c2d"/></svg>
<svg class="a" style="left:1614px;top:1756px;" width="30" height="30" viewBox="0 0 30 30"><rect x="3.5" y="3.9" width="20.8" height="20.6" rx="2.8" fill="none" stroke="#dcdcdc" stroke-width="2.2"/><path d="M9.9 7.6L17.6 15.2H14.4L16.6 19.9L14.6 20.8L12.5 16.1L9.9 18.4Z" fill="#d2d2d2"/></svg>
<svg class="a" style="left:1660px;top:1756px;" width="34" height="30" viewBox="0 0 34 30"><g fill="none" stroke="#dedede" stroke-width="1.9"><rect x="3.15" y="3.75" width="5.8" height="7.8" rx="1.4"/><rect x="3.15" y="16.85" width="5.8" height="7.8" rx="1.4"/><rect x="13.45" y="3.75" width="5.8" height="7.8" rx="1.4"/><rect x="13.45" y="16.85" width="5.8" height="7.8" rx="1.4"/><rect x="23.65" y="3.75" width="5.8" height="7.8" rx="1.4"/><rect x="23.65" y="16.85" width="5.8" height="7.8" rx="1.4"/></g></svg>
<svg class="a" style="left:1746px;top:1756px;" width="34" height="30" viewBox="0 0 34 30"><rect x="4.3" y="3.8" width="23.8" height="8.3" rx="4.15" fill="none" stroke="#dcdcdc" stroke-width="2"/><circle cx="9" cy="8" r="2.1" fill="#dcdcdc"/><rect x="3.3" y="16.6" width="25.8" height="10.3" rx="5.15" fill="#dcdcdc"/><circle cx="23.8" cy="21.7" r="3" fill="#2c2c2d"/></svg>
<svg class="a" style="left:1831px;top:1756px;" width="30" height="30" viewBox="0 0 30 30"><circle cx="15.1" cy="14.8" r="11.6" fill="none" stroke="#8c8c8c" stroke-width="2.2"/><rect x="11.3" y="8.2" width="7.6" height="13.4" rx="1.8" fill="none" stroke="#8c8c8c" stroke-width="1.6"/><path d="M14 9.9h2.2M13.6 19.9h3" stroke="#8c8c8c" stroke-width="1" stroke-linecap="round"/></svg>
<svg class="a" style="left:2173.5px;top:1754.1px;" width="32" height="32" viewBox="0 0 32 32"><circle cx="14" cy="14" r="9.1" fill="none" stroke="#e6e6e6" stroke-width="2.8"/><path d="M20.9 22.3L27.2 27.8" stroke="#e6e6e6" stroke-width="3.1" stroke-linecap="round"/><path d="M9.8 14H18.2" stroke="#e6e6e6" stroke-width="2"/></svg>
<svg class="a" style="left:2221.4px;top:1754.1px;" width="32" height="32" viewBox="0 0 32 32"><circle cx="14" cy="14" r="9.1" fill="none" stroke="#e6e6e6" stroke-width="2.8"/><path d="M20.9 22.3L27.2 27.8" stroke="#e6e6e6" stroke-width="3.1" stroke-linecap="round"/><path d="M11.6 11.6L14.5 9.8V18.6" fill="none" stroke="#e6e6e6" stroke-width="1.9"/></svg>
<svg class="a" style="left:2269.4px;top:1754.1px;" width="32" height="32" viewBox="0 0 32 32"><circle cx="14" cy="14" r="9.1" fill="none" stroke="#9a9a9a" stroke-width="2.8"/><path d="M20.9 22.3L27.2 27.8" stroke="#9a9a9a" stroke-width="3.1" stroke-linecap="round"/><rect x="10.6" y="10.6" width="6.8" height="6.8" fill="none" stroke="#9a9a9a" stroke-width="2"/></svg>
<svg class="a" style="left:2317.4px;top:1754.1px;" width="32" height="32" viewBox="0 0 32 32"><circle cx="14" cy="14" r="9.1" fill="none" stroke="#e6e6e6" stroke-width="2.8"/><path d="M20.9 22.3L27.2 27.8" stroke="#e6e6e6" stroke-width="3.1" stroke-linecap="round"/><path d="M9.8 14H18.2M14 9.8V18.2" stroke="#e6e6e6" stroke-width="2"/></svg>
<svg class="a" style="left:1941px;top:1007px;" width="34" height="34" viewBox="0 0 34 34"><g fill="none" stroke="#ff8c0a" stroke-width="2"><circle cx="17" cy="17" r="13.9"/><ellipse cx="17" cy="17" rx="6.7" ry="13.9"/><path d="M17 3.1V30.9M3.1 17H30.9"/><path d="M6.6 8.1Q17 12.8 27.4 8.1M6.6 25.9Q17 21.2 27.4 25.9"/></g></svg>
<svg class="a" style="left:678px;top:1838px;" width="36" height="24" viewBox="0 0 36 24"><path d="M5.4 2.4H24.4Q26 2.4 27 3.6L31.6 9.6Q32.6 11.2 31.6 12.8L27 18.8Q26 20 24.4 20H5.4Q3 20 3 17.6V4.8Q3 2.4 5.4 2.4Z" fill="#0a63ff"/></svg>
<div class="a" style="left:2320.4px;top:1838px;width:1.40px;height:22.00px;background:#3d3533;"></div>
<svg class="a" style="left:2336px;top:1833px;" width="32" height="32" viewBox="0 0 32 32"><rect x="4" y="4.4" width="24.2" height="23.2" rx="4.4" fill="none" stroke="#a39a97" stroke-width="2.2"/><rect x="7.6" y="19" width="17" height="5" rx="1.2" fill="#a39a97"/></svg>
<div class="a" style="left:2590px;top:272px;width:280.00px;height:31.60px;background:#2f2726;border-radius:7px;box-shadow:inset 0 0 0 1px rgba(255,255,255,.07),inset 0 -1px 0 0 rgba(255,255,255,.10);"></div>
<div class="a" style="left:2601.9px;top:285.4px;width:10.00px;height:2.00px;background:#bdb5b2;"></div>
<div class="a" style="left:2847.9px;top:286px;width:10.20px;height:2.00px;background:#d6cfcc;"></div>
<div class="a" style="left:2852px;top:281.9px;width:2.00px;height:10.20px;background:#d6cfcc;"></div>
<div class="t" style="left:2715.59px;top:277.14px;font-size:23px;color:#ece8e6;letter-spacing:2.371px;">20</div>
<div class="a" style="left:2588.3px;top:314.2px;width:278.50px;height:35.50px;background:#2f2726;border-radius:8px;box-shadow:inset 0 0 0 1px rgba(255,255,255,.07),inset 0 -1px 0 0 rgba(255,255,255,.10);"></div>
<div class="a" style="left:2800px;top:315.8px;width:66.20px;height:32.20px;background:#5a5250;border-radius:6.5px;"></div>
<div class="a" style="left:2654.2px;top:321px;width:1.40px;height:21.60px;background:#3b3331;"></div>
<div class="a" style="left:2726.5px;top:321px;width:1.40px;height:21.60px;background:#3b3331;"></div>
<svg class="a" style="left:2600px;top:318px;" width="40" height="28" viewBox="0 0 40 28"><rect x="10.5" y="4.4" width="25.2" height="6.8" fill="#57504e" stroke="#b5adaa" stroke-width="1.8"/><rect x="10.5" y="16.3" width="14.3" height="7.1" fill="#57504e" stroke="#b5adaa" stroke-width="1.8"/><path d="M6.9 3.9V23.7" stroke="#e8e4e2" stroke-width="2.3"/></svg>
<svg class="a" style="left:2671px;top:318px;" width="40" height="28" viewBox="0 0 40 28"><rect x="5.3" y="4.4" width="29.4" height="6.8" fill="#57504e" stroke="#b5adaa" stroke-width="1.8"/><rect x="9.3" y="16.3" width="21.3" height="7.1" fill="#57504e" stroke="#b5adaa" stroke-width="1.8"/><path d="M20 3.9V23.7" stroke="#2f2726" stroke-width="5.4"/><path d="M20 3.9V23.7" stroke="#e8e4e2" stroke-width="2.3"/></svg>
<svg class="a" style="left:2744px;top:318px;" width="40" height="28" viewBox="0 0 40 28"><rect x="4.4" y="4.4" width="25.6" height="6.8" fill="#57504e" stroke="#b5adaa" stroke-width="1.8"/><rect x="15.3" y="16.3" width="14.7" height="7.1" fill="#57504e" stroke="#b5adaa" stroke-width="1.8"/><path d="M33.2 3.9V23.7" stroke="#e8e4e2" stroke-width="2.3"/></svg>
<svg class="a" style="left:2820px;top:318px;" width="28" height="28" viewBox="0 0 28 28"><circle cx="13.9" cy="14" r="9.9" fill="none" stroke="#f0ecea" stroke-width="2"/><path d="M13.9 8V19.4M9.1 15L13.9 19.7L18.7 15" fill="none" stroke="#f0ecea" stroke-width="2" stroke-linecap="round" stroke-linejoin="round"/></svg>
<div class="a" style="left:2590px;top:509.4px;width:280.00px;height:29.60px;background:#2f2726;box-shadow:inset 0 0 0 1px rgba(255,255,255,.04),inset 0 -1.5px 0 0 rgba(255,255,255,.20);"></div>
<div class="a" style="left:2590px;top:555px;width:280.00px;height:29.60px;background:#2f2726;box-shadow:inset 0 0 0 1px rgba(255,255,255,.04),inset 0 -1.5px 0 0 rgba(255,255,255,.20);"></div>
<div class="t" style="left:2594.39px;top:512.74px;font-size:24px;color:#655d5b;letter-spacing:0.170px;">Inherited</div>
<div class="t" style="left:2594.39px;top:558.34px;font-size:24px;color:#655d5b;letter-spacing:0.170px;">Inherited</div>
<svg class="a" style="left:2879.8px;top:511.6px;" width="24" height="24" viewBox="0 0 24 24"><circle cx="12" cy="12" r="10" fill="none" stroke="#4f4745" stroke-width="1.8"/></svg>
<svg class="a" style="left:2879.8px;top:557.2px;" width="24" height="24" viewBox="0 0 24 24"><circle cx="12" cy="12" r="10" fill="none" stroke="#4f4745" stroke-width="1.8"/></svg>
<svg class="a" style="left:2880px;top:913px;" width="24" height="24" viewBox="0 0 24 24"><circle cx="12" cy="12" r="10" fill="none" stroke="#4f4745" stroke-width="1.8"/></svg>
<svg class="a" style="left:2596px;top:690px;" width="270" height="114" viewBox="0 0 270 114"><g fill="none" stroke="#5f5755" stroke-width="1.6"><path d="M5.8 36.9V12.6Q5.8 6.1 12.3 6.1H113.9M153.8 6.1H255.8Q262.3 6.1 262.3 12.6V36.9"/><path d="M5.8 76.9V101.5Q5.8 108 12.3 108H113.9M153.8 108H255.8Q262.3 108 262.3 101.5V76.9"/></g></svg>
<div class="a" style="left:2718.2px;top:682.3px;width:23.90px;height:23.80px;border-radius:5.2px;background:linear-gradient(#4b4341,#5e5654);box-shadow:0 0 0 0.5px rgba(0,0,0,.25);"></div>
<div class="a" style="left:2718.2px;top:788.2px;width:23.90px;height:23.80px;border-radius:5.2px;background:linear-gradient(#4b4341,#5e5654);box-shadow:0 0 0 0.5px rgba(0,0,0,.25);"></div>
<div class="a" style="left:2588.2px;top:735px;width:23.90px;height:23.80px;border-radius:5.2px;background:linear-gradient(#4b4341,#5e5654);box-shadow:0 0 0 0.5px rgba(0,0,0,.25);"></div>
<div class="a" style="left:2848.1px;top:735px;width:23.90px;height:23.80px;border-radius:5.2px;background:linear-gradient(#4b4341,#5e5654);box-shadow:0 0 0 0.5px rgba(0,0,0,.25);"></div>
<div class="a" style="left:2636.3px;top:732.4px;width:187.50px;height:31.20px;background:#2f2726;border-radius:7px;box-shadow:inset 0 0 0 1px rgba(255,255,255,.07),inset 0 -1px 0 0 rgba(255,255,255,.10);"></div>
<div class="a" style="left:2648.0px;top:745.9px;width:10.00px;height:2.00px;background:#bdb5b2;"></div>
<div class="a" style="left:2801.7000000000003px;top:745.9px;width:10.20px;height:2.00px;background:#d6cfcc;"></div>
<div class="a" style="left:2805.8px;top:741.8px;width:2.00px;height:10.20px;background:#d6cfcc;"></div>
<div class="t" style="left:2691.73px;top:736.84px;font-size:22.8px;color:#6b6361;letter-spacing:0.566px;">Default</div>
<div class="a" style="left:2881px;top:735.9px;width:22.00px;height:22.00px;background:#0a66ff;border-radius:11px;"></div>
<div class="a" style="left:2590.4px;top:910px;width:128.20px;height:31.70px;background:#2f2726;border-radius:7px;box-shadow:inset 0 0 0 1px rgba(255,255,255,.07),inset 0 -1px 0 0 rgba(255,255,255,.10);"></div>
<div class="a" style="left:2741.1px;top:910px;width:128.90px;height:31.70px;background:#2f2726;border-radius:7px;box-shadow:inset 0 0 0 1px rgba(255,255,255,.07),inset 0 -1px 0 0 rgba(255,255,255,.10);"></div>
<div class="a" style="left:2601.8px;top:924px;width:10.00px;height:2.00px;background:#bdb5b2;"></div>
<div class="a" style="left:2697.1px;top:924px;width:10.20px;height:2.00px;background:#d6cfcc;"></div>
<div class="a" style="left:2701.2px;top:919.9px;width:2.00px;height:10.20px;background:#d6cfcc;"></div>
<div class="a" style="left:2752.9px;top:924px;width:10.00px;height:2.00px;background:#bdb5b2;"></div>
<div class="a" style="left:2848.0px;top:924px;width:10.20px;height:2.00px;background:#d6cfcc;"></div>
<div class="a" style="left:2852.1px;top:919.9px;width:2.00px;height:10.20px;background:#d6cfcc;"></div>
<div class="t" style="left:2626.50px;top:914.54px;font-size:22.8px;color:#6b6361;letter-spacing:0.503px;">Inher</div>
<div class="t" style="left:2777.40px;top:914.54px;font-size:22.8px;color:#6b6361;letter-spacing:0.528px;">Inher</div>
<div class="t" style="left:2629.97px;top:946.45px;font-size:18.4px;color:#9c9491;letter-spacing:0.886px;-webkit-text-stroke:0.35px #9c9491;">Width</div>
<div class="t" style="left:2775.09px;top:946.45px;font-size:18.4px;color:#9c9491;letter-spacing:1.011px;-webkit-text-stroke:0.35px #9c9491;">Height</div>
<div class="a" style="left:2425.8px;top:1036.4px;width:452.20px;height:33.60px;background:#2f2726;box-shadow:inset 0 0 0 1px rgba(255,255,255,.04),inset 0 -1.5px 0 0 rgba(255,255,255,.20);"></div>
<div class="t" style="left:2432.95px;top:1040.33px;font-size:26.4px;color:#5a524f;letter-spacing:-0.429px;">Add Modifier</div>
<svg class="a" style="left:131px;top:1832px;" width="32" height="32" viewBox="0 0 32 32"><path d="M15.8 6V25.6M6 15.8H25.6" stroke="#e8e4e2" stroke-width="2.4" stroke-linecap="round"/></svg>
<svg class="a" style="left:176px;top:1834px;" width="56" height="28" viewBox="0 0 56 28"><rect x="2" y="2.2" width="50" height="23.6" rx="11.8" fill="none" stroke="#b9b1ae" stroke-width="1.8"/><path d="M11.4 9.4H23.6M13.6 14H21.4M15.8 18.6H19.2" stroke="#b9b1ae" stroke-width="1.9" stroke-linecap="round"/><path d="M33.2 12.2L38.2 16.8L43.2 12.2" fill="none" stroke="#b9b1ae" stroke-width="2.2" stroke-linecap="round" stroke-linejoin="round"/></svg>
<svg class="a" style="left:572px;top:1834px;" width="28" height="28" viewBox="0 0 28 28"><circle cx="14.6" cy="14" r="11.6" fill="none" stroke="#e2dcda" stroke-width="1.9"/><path d="M14.8 6.6V14.4H9.4" fill="none" stroke="#e2dcda" stroke-width="1.9"/></svg>
<svg class="a" style="left:607px;top:1834px;" width="30" height="28" viewBox="0 0 30 28"><rect x="2.4" y="2.2" width="24" height="23.6" rx="2" fill="none" stroke="#e2dcda" stroke-width="1.9"/><path d="M6.2 14H13.4M9.8 10.4V17.6M16.6 14H22.6" stroke="#e2dcda" stroke-width="1.9"/></svg>
</div>
<div id="rim"></div>
</div>
</body></html>
